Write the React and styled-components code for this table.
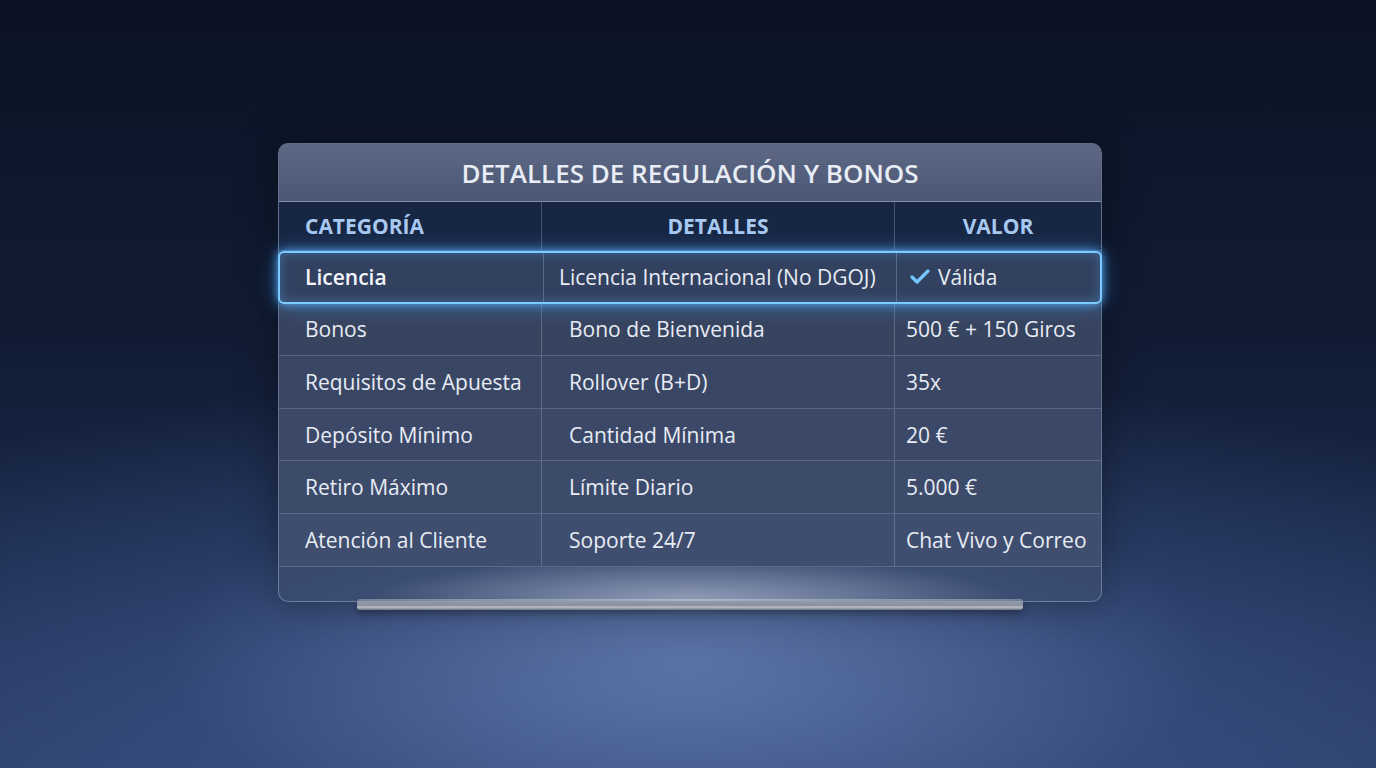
import React from 'react';
import styled, { createGlobalStyle } from 'styled-components';
import { Check } from 'lucide-react';

const GlobalStyle = createGlobalStyle`
  html, body {
    margin: 0;
    padding: 0;
    background: #0c1426;
  }
  body {
    font-family: "Open Sans", "Noto Sans", "Liberation Sans", sans-serif;
  }
`;

const Page = styled.div`
  width: 1376px;
  height: 768px;
  overflow: hidden;
  display: flex;
  flex-direction: column;
  align-items: center;
  padding: 143px 0 0 4px;
  box-sizing: border-box;
  background:
    radial-gradient(ellipse 520px 200px at 688px 660px, rgba(120, 145, 195, 0.5), rgba(120, 145, 195, 0) 100%),
    radial-gradient(ellipse 1100px 330px at 688px 700px, rgba(70, 95, 150, 0.8), rgba(40, 60, 105, 0) 100%),
    linear-gradient(180deg, #0b1224 0%, #111c34 45%, #1b2b4e 75%, #2a3c66 100%);
`;

const Panel = styled.div`
  width: 824px;
  border: 1px solid rgba(200, 215, 240, 0.35);
  border-radius: 10px;
  background: rgba(62, 76, 108, 0.6);
  box-shadow: 0 0 40px rgba(0, 0, 0, 0.35), inset 0 1px 0 rgba(255, 255, 255, 0.2);
  box-sizing: border-box;
  display: flex;
  flex-direction: column;
  position: relative;
  z-index: 1;
`;

const TitleBar = styled.div`
  height: 57px;
  display: flex;
  align-items: center;
  justify-content: center;
  border-radius: 9px 9px 0 0;
  background: linear-gradient(180deg, #5d6885 0%, #4c5775 100%);
  border-bottom: 1px solid rgba(210, 220, 240, 0.35);
  color: #e8ecf4;
  font-size: 26px;
  font-weight: 600;
`;

const Row = styled.div`
  display: grid;
  grid-template-columns: 262px 353px 1fr;
  height: ${p => p.$h || 52.6}px;
  box-sizing: border-box;
  background: ${p => p.$bg || 'transparent'};
  border-bottom: 1px solid rgba(200, 215, 240, 0.22);
  position: relative;

  ${p => p.$active && `
    margin: 0 -1px;
    padding: 0 1px;
    border: 2px solid #7ccbff;
    border-radius: 6px;
    box-shadow: 0 0 10px rgba(90, 180, 255, 0.9), 0 0 22px rgba(70, 160, 255, 0.45), inset 0 0 12px rgba(90, 180, 255, 0.35);
    z-index: 2;
  `}
`;

const Cell = styled.div`
  display: flex;
  align-items: center;
  justify-content: ${p => (p.$center ? 'center' : 'flex-start')};
  padding-left: ${p => (p.$center ? 0 : p.$pad)}px;
  gap: 6px;
  border-left: ${p => (p.$first ? 'none' : '1px solid rgba(200, 215, 240, 0.25)')};
  color: ${p => p.$color || '#e8ecf4'};
  font-size: 21px;
  font-weight: ${p => p.$weight || 400};
  white-space: nowrap;
`;

const Footer = styled.div`
  height: 34px;
  border-radius: 0 0 9px 9px;
  background: radial-gradient(ellipse 320px 44px at 50% 100%, rgba(225, 232, 248, 0.5), rgba(220, 228, 245, 0) 100%);
`;

const Stand = styled.div`
  width: 666px;
  height: 11px;
  margin-top: -3px;
  border-radius: 3px;
  background: linear-gradient(180deg, #dfe4ec 0%, #b0b8c7 25%, #a3abbc 60%, #dde2ea 72%, #7b8499 100%);
  box-shadow: 0 3px 8px rgba(0, 0, 0, 0.35);
  position: relative;
  z-index: 0;
`;

const rows = [
  ['Bonos', 'Bono de Bienvenida', '500 € + 150 Giros'],
  ['Requisitos de Apuesta', 'Rollover (B+D)', '35x'],
  ['Depósito Mínimo', 'Cantidad Mínima', '20 €'],
  ['Retiro Máximo', 'Límite Diario', '5.000 €'],
  ['Atención al Cliente', 'Soporte 24/7', 'Chat Vivo y Correo'],
];

const rowBg = ['#37445f', '#394664', '#3b4867', '#3d4b6b', '#3f4e6f'];

export default function App() {
  return (
    <>
      <GlobalStyle />
      <Page>
        <Panel>
          <TitleBar>DETALLES DE REGULACIÓN Y BONOS</TitleBar>
          <Row $h={49} $bg="#172642">
            <Cell $first $pad={26} $color="#a8c9f0" $weight={700}>CATEGORÍA</Cell>
            <Cell $center $color="#a8c9f0" $weight={700}>DETALLES</Cell>
            <Cell $center $color="#a8c9f0" $weight={700}>VALOR</Cell>
          </Row>
          <Row $active $bg="#32415f">
            <Cell $first $pad={24} $color="#f2f5fa" $weight={600}>Licencia</Cell>
            <Cell $pad={15}>Licencia Internacional (No DGOJ)</Cell>
            <Cell $pad={11}>
              <Check size={24} strokeWidth={3.4} color="#74c6ff" />
              Válida
            </Cell>
          </Row>
          {rows.map((r, i) => (
            <Row key={r[0]} $bg={rowBg[i]}>
              <Cell $first $pad={26}>{r[0]}</Cell>
              <Cell $pad={27}>{r[1]}</Cell>
              <Cell $pad={11}>{r[2]}</Cell>
            </Row>
          ))}
          <Footer />
        </Panel>
        <Stand />
      </Page>
    </>
  );
}
